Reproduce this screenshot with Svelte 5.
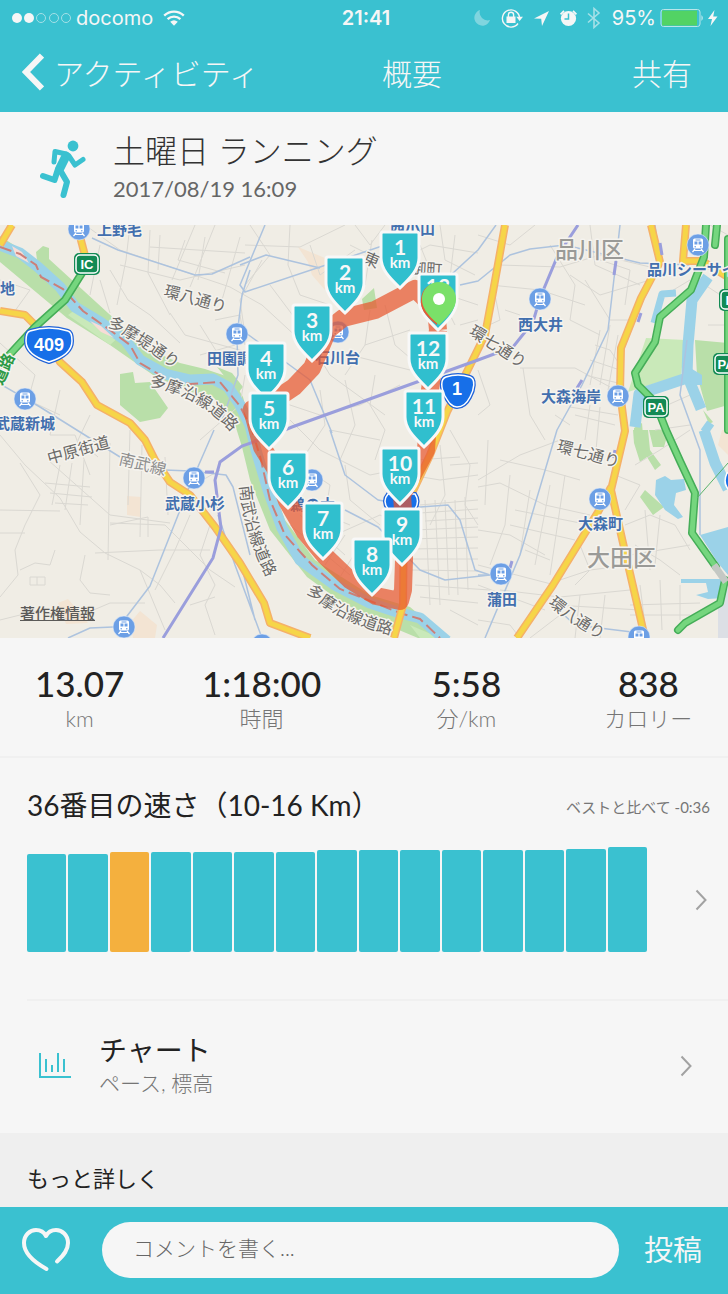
<script>
  const stats = [
    { value: "13.07", unit: "km" },
    { value: "1:18:00", unit: "時間" },
    { value: "5:58", unit: "分/km" },
    { value: "838", unit: "カロリー" },
  ];

  const paces = [98, 98, 100, 100, 100, 100, 100, 102, 102, 102, 102, 102, 102, 103, 105];
  const current = 2;

  // x is the middle of the shield, y its top; later ones lie on top
  const markers = [
    { km: 1, x: 400, y: 7 },
    { km: 2, x: 345, y: 32 },
    { km: 13, x: 438, y: 49 },
    { km: 3, x: 312, y: 80 },
    { km: 12, x: 428, y: 108 },
    { km: 4, x: 266, y: 118 },
    { km: 11, x: 424, y: 166 },
    { km: 5, x: 269, y: 168 },
    { km: 10, x: 400, y: 223 },
    { km: 6, x: 288, y: 227 },
    { km: 7, x: 323, y: 278 },
    { km: 9, x: 402, y: 284 },
    { km: 8, x: 372, y: 314 },
  ];

  const stations = [
    [79, 4], [237, 109], [25, 174], [194, 253], [124, 402], [338, 107],
    [312, 255], [540, 74], [698, 20], [618, 171], [600, 274], [501, 349],
    [639, 412], [262, 420],
  ];

  const places = [
    { text: "上野毛", x: 97, y: 10 },
    { text: "地", x: 0, y: 69 },
    { text: "田園調布", x: 207, y: 139 },
    { text: "石川台", x: 315, y: 138 },
    { text: "武蔵新城", x: -5, y: 204 },
    { text: "武蔵小杉", x: 165, y: 284 },
    { text: "鵜の木", x: 290, y: 285 },
    { text: "西小山", x: 390, y: 9 },
    { text: "西大井", x: 518, y: 105 },
    { text: "品川シーサイド", x: 647, y: 50 },
    { text: "大森海岸", x: 541, y: 177 },
    { text: "大森町", x: 578, y: 304 },
    { text: "蒲田", x: 487, y: 380 },
  ];

  const streets = [
    { text: "環八通り", d: "M163 71 L230 89" },
    { text: "多摩堤通り", d: "M107 101 Q142 119 178 147" },
    { text: "多摩沿線道路", d: "M149 161 Q205 172 238 215" },
    { text: "中原街道", d: "M49 239 L115 221" },
    { text: "南武線", d: "M118 239 L175 253", rail: true },
    { text: "南武沿線道路", d: "M240 261 Q244 315 274 365" },
    { text: "多摩沿線道路", d: "M306 367 Q340 399 400 412" },
    { text: "環七通り", d: "M468 109 L530 149" },
    { text: "環七通り", d: "M556 226 L630 246" },
    { text: "環八通り", d: "M548 379 Q572 401 612 420" },
    { text: "東", d: "M362 37 L390 49" },
    { text: "御町", d: "M410 49 L450 51" },
  ];

  const minorRoads = [
    "M85 0 L120 25 L230 62 L262 80", "M130 0 L126 35 L117 80", "M195 0 L172 55", "M215 0 L190 62",
    "M240 12 L222 75", "M150 5 L148 48 L170 90", "M110 45 L128 75 L150 90 L180 118",
    "M170 88 L185 110 L250 128", "M100 55 L110 88 M120 40 L180 55 L245 40", "M100 20 L90 70",
    "M185 15 L178 35 L225 48", "M150 22 L245 28 M160 10 L158 45 M205 12 L198 55",
    "M0 55 L30 65 L12 90", "M0 118 L35 150 L28 175 L60 190", "M60 165 L50 210 L75 210 L90 250",
    "M90 190 L78 215 L98 232 M130 205 L128 280", "M0 210 L25 240 L60 273 L80 307 L105 328",
    "M20 238 L40 270 L25 300 L15 325 L18 350 L0 372", "M0 285 L60 286 M0 308 L25 308",
    "M48 235 L110 290 L170 298", "M45 258 L90 262 M50 268 L92 272 M55 278 L88 280",
    "M60 240 L52 280 M72 238 L65 285 M84 235 L80 300", "M110 218 L108 335 M142 220 L140 312",
    "M110 300 L148 292 L148 312 M95 328 L160 325 L210 325", "M20 345 L35 338 L50 340 L55 325",
    "M30 352 L45 352 L45 360 L30 360 Z M37 352 V360", "M85 330 L80 355 L90 368 L110 370",
    "M105 328 L140 345 L160 360 L175 378", "M110 298 L165 300 L185 320 L210 345 L235 362",
    "M140 345 L165 405 M190 290 L175 325 L155 365", "M210 300 L200 330 L215 360 L205 380 L215 410",
    "M190 380 L215 372 M0 395 L40 385 L70 395 L110 378 L145 378",
    "M165 232 L168 290 M185 265 L220 245 M200 215 L240 180 L245 150",
    "M245 20 L300 22 L345 0 M250 0 L270 30 L245 60", "M290 0 L288 40 L300 70 L330 80",
    "M262 35 L240 75 L245 110 M270 60 L300 100 L330 150 L385 190", "M262 80 L300 115",
    "M310 20 L320 50 L355 25 M355 0 L370 20 L385 0", "M350 20 L390 40 L430 20 L478 28",
    "M370 85 L365 120 L345 150 M385 80 L395 120 L430 150", "M365 120 L410 105 M350 130 L410 145",
    "M290 195 L320 225 L370 250 L395 245", "M275 175 L320 190 L360 180 L400 160",
    "M320 165 L325 200 L305 230 M345 155 L355 200 L340 235", "M375 150 L370 180 L385 205 L375 235",
    "M330 205 L380 215 M440 0 L445 35 L475 50", "M455 10 L448 70 L478 80 M460 100 L478 95",
    "M300 240 L330 260 L325 290 L350 300 M345 240 L350 275 L380 300",
    "M335 310 L380 290 L400 300 M325 340 L345 310 M340 352 L360 320",
    "M290 300 L350 350 M300 290 L345 330 M310 325 L330 300",
    "M440 220 L445 270 L430 300 M450 205 L470 240 L465 280 L478 300",
    "M410 250 L440 255 L478 250 M415 235 L460 232", "M420 280 L478 275 M420 288 L478 284 M425 296 L478 293",
    "M415 305 L478 302 M410 314 L478 312 M410 324 L478 323 M412 334 L478 334 M412 345 L478 346",
    "M425 275 L430 380 M435 275 L440 380 M445 275 L449 370 M455 275 L458 370 M465 272 L468 365",
    "M415 360 L490 365 M420 372 L478 378", "M450 240 L478 238 M488 215 L485 280",
    "M478 10 L510 20 L535 0 M490 60 L540 65 L585 80", "M495 70 L500 95 L478 105 M505 85 L520 90",
    "M500 40 L560 42 L600 30 L650 42", "M550 20 L575 60 L570 95 L600 110", "M590 0 L595 40 L640 60",
    "M600 35 L630 45 L625 80 M570 50 L600 70 L650 55", "M585 55 L610 95 L630 95",
    "M520 143 L575 143 L610 162", "M523 143 L530 190 L545 215", "M478 145 L490 180 L478 190",
    "M595 120 L610 125 L620 140 M590 135 L620 145 M585 150 L618 158",
    "M600 105 L590 160 M610 100 L600 160 M618 110 L608 165",
    "M570 182 L618 190 M575 190 L615 200 M590 180 L585 215 M600 182 L596 225",
    "M570 200 L555 190 M478 255 L520 230 L560 215", "M478 262 L500 258 L545 280 L590 290",
    "M500 235 L545 245 L580 255 M510 250 L505 300 L490 340", "M515 285 L590 300 M510 300 L575 315",
    "M530 265 L520 330 M550 260 L535 340 M565 250 L550 350 M525 325 L550 335",
    "M478 305 L510 310 L545 330 M478 340 L555 360 M478 360 L545 385",
    "M500 365 L560 372 L630 365 M560 355 L590 345 L630 340", "M580 320 L590 345 L575 360",
    "M635 240 L660 225 L690 205 M615 250 L640 260 L625 285", "M625 300 L650 290 L675 300 L690 325",
    "M645 285 L650 345 M660 290 L655 340 M630 330 L690 320", "M635 320 L660 335 L680 350",
    "M630 380 L700 378 M630 390 L690 390 M640 360 L645 400 M660 355 L662 405 M680 360 L680 395",
    "M555 380 L640 385 M580 370 L575 413 M605 370 L600 413", "M530 413 L560 390",
    "M670 80 L650 120 M665 70 L690 55 M710 0 L728 10", "M705 60 L728 75 M708 100 L728 100",
    "M645 190 L690 170 M655 205 L690 200", "M420 20 L440 70 L455 100 M372 15 L365 60",
    "M478 395 L510 400 L520 413 M450 385 L478 400", "M200 130 L235 120 M215 95 L240 90 L245 120 M200 100 L225 140",
  ];

  const railways = [
    "M92 13 L118 25 L195 50 L212 49 L250 32",
    "M250 45 L242 70 L237 110 L238 150 L222 195",
    "M265 0 L240 60 L245 67 L320 42 L385 20", "M240 40 L266 30 L320 43",
    "M0 159 L40 182 L120 232", "M214 205 L190 260 L150 361 L124 395", "M113 402 L90 403 L68 413",
    "M235 100 L310 155 L332 208", "M330 205 L345 250 L378 275 L420 282 L448 280 L460 295 L475 345 L490 350",
    "M165 245 L190 246 L226 250 L233 262 L250 330",
    "M218 290 L235 340 L262 413 M240 335 L255 395", "M460 60 L478 56 L510 30 L530 24 L565 20 L640 38 L690 40",
    "M620 0 L615 45 L608 105 L582 160 L557 205 L520 330 L485 413", "M345 285 L378 302 L420 345 L445 355 L490 350",
    "M553 380 L575 400 L640 408 M478 350 L500 350", "M440 60 L478 25 L496 0 M687 115 L680 170 L700 225 L700 310",
    "M655 0 L660 38 L641 80 L622 128",
  ];

  const mainRoads = [
    "M12 0 L0 20", "M77 0 L88 42",
    "M0 86 L25 90 L42 107 L60 137 L82 157 L97 180 L130 198 L145 215 L155 235 L170 257 L190 270 L215 302 L240 338 L264 378 L270 398 L310 413",
    "M505 0 L493 67 L485 110 L447 187 L430 230 L404 285 L403 380 L394 413",
    "M651 0 L660 37 L641 73 L621 123 L620 167 L625 206 L611 265 L623 318 L645 413",
    "M611 262 L598 287 L553 360 L517 413",
    "M686 0 L683 36 L702 36 L728 52",
  ];

  const expressways = [
    "M87 40 L65 75 L35 102 L0 140",
    "M706 0 L704 32 L691 65 L660 92 L655 117 L635 148 L638 160 L655 177 L666 205 L680 236 L695 268 L692 308 L716 342",
    "M725 355 L720 378 L685 398 L678 405", "M728 14 V205", "M717 0 L715 20",
  ];
</script>

<main>
  <header>
    <div class="status">
      <div class="carrier">
        <svg width="60" height="12" viewBox="0 0 60 12" aria-hidden="true">
          <g fill="#f6f6f6"><circle cx="5" cy="6" r="5" /><circle cx="17" cy="6" r="5" /></g>
          <g fill="none" stroke="#a5e0e7"><circle cx="29" cy="6" r="4.5" /><circle cx="42" cy="6" r="4.5" /><circle cx="54" cy="6" r="4.5" /></g>
        </svg>
        <span>docomo</span>
        <svg class="wifi" width="22" height="16" viewBox="0 0 22 16" aria-hidden="true">
          <g fill="none" stroke="#f6f6f6" stroke-width="2.4">
            <path d="M1.2 5.6 C6.8 .3 15.2 .3 20.8 5.6" />
            <path d="M4.6 9.2 C8.3 5.8 13.7 5.8 17.4 9.2" />
          </g>
          <path fill="#f6f6f6" d="M7.2 11.8 Q11 8.8 14.8 11.8 L11 15.8 Z" />
        </svg>
      </div>
      <span class="clock">21:41</span>
      <div class="indicators">
        <svg width="136" height="24" viewBox="0 0 136 24" aria-hidden="true">
          <path fill="#7fd5df" d="M8 4 A8 8 0 1 0 18 14 A8 8 0 0 1 8 4" />
          <g fill="none" stroke="#f6f6f6" stroke-width="1.4">
            <path d="M46 17.5 A8.6 8.6 0 1 1 47.6 12" />
            <path d="M36.4 11 V8.8 A2.6 2.6 0 0 1 41.6 8.8 V11" />
          </g>
          <path fill="#f6f6f6" d="M34.5 10.5 H43.5 V17 H34.5 Z M44.3 10.8 H51 L47.6 15 Z M62 12.6 L77 5 L70 20 L69.2 12.8 Z" />
          <circle cx="96.500" cy="12.500" r="7.600" fill="#f6f6f6" />
          <path fill="none" stroke="#f6f6f6" stroke-width="1.8" d="M88.6 8.4 L92 4.8 M101 4.8 L104.400 8.400" />
          <path fill="none" stroke="#3ac1d0" stroke-width="1.5" d="M96.5 7.5 V13 H92.5" />
          <path fill="none" stroke="#a5e0e7" stroke-width="1.6" d="M116 7.5 L127 17 L122 21.500 V2.500 L127 7 L116 16.500" />
        </svg>
        <span>95%</span>
        <svg width="60" height="20" viewBox="0 0 60 20" aria-hidden="true">
          <rect x="1" y="1.500" width="39" height="17" rx="2.500" fill="#3ac1d0" stroke="#b9e6ea" />
          <path fill="#52d364" d="M2 2.500 H37 V17.500 H2 Z" />
          <path fill="#cdeef1" d="M41.500 7 Q44 10 41.500 13 Z" />
          <path fill="#f6f6f6" d="M54.500 2 L48 11 H52 L50.500 18 L57.500 8.500 H53.200 Z" />
        </svg>
      </div>
    </div>

    <nav>
      <button class="back">
        <svg width="22" height="38" viewBox="0 0 22 38" aria-hidden="true">
          <path fill="none" stroke="#f6f6f6" stroke-width="6" d="M20 2.500 L4 19 L20 35.500" />
        </svg>
        アクティビティ
      </button>
      <h1>概要</h1>
      <button class="share">共有</button>
    </nav>
  </header>

  <section class="activity">
    <svg width="46" height="60" viewBox="0 0 46 60" aria-hidden="true">
      <circle cx="33" cy="7" r="5.400" fill="#3ac1d0" />
      <g fill="none" stroke="#3ac1d0" stroke-linecap="round" stroke-linejoin="round">
        <path stroke-width="5" d="M14 23 L15 12.500 L26 15" />
        <path stroke-width="9" d="M26 17 L20 29" />
        <path stroke-width="5" d="M29 17 L35 26 L43 20.500" />
        <path stroke-width="6" d="M18 30 L14.500 41 L3 37" />
        <path stroke-width="6" d="M20 31 L27 43 L23.500 56" />
      </g>
    </svg>
    <div>
      <h2>土曜日 ランニング</h2>
      <time datetime="2017-08-19T16:09">2017/08/19 16:09</time>
    </div>
  </section>

  <section class="map">
    <svg viewBox="0 0 728 413" role="img" aria-label="ランニングコース">
      <defs>
        <g id="train">
          <circle r="11" fill="#6c9fe5" stroke="#e4edf7" stroke-width="0.600" />
          <rect x="-5" y="-6.500" width="10" height="10" rx="1.500" fill="#fff" />
          <path stroke="#6c9fe5" stroke-width="3" d="M-3.500 -2 H-.6 M.6 -2 H3.500" />
          <path stroke="#6c9fe5" stroke-width="1" d="M-2.500 -5 H2.500" />
          <path fill="none" stroke="#fff" stroke-width="1.200" d="M-3 4 L-5.500 7 M3 4 L5.500 7 M-4 5.500 H4" />
          <circle cx="-2.800" cy="1.800" r=".8" fill="#6c9fe5" />
          <circle cx="2.800" cy="1.800" r=".8" fill="#6c9fe5" />
        </g>
        <path id="shield" d="M-17 0 H17 Q19 0 19 2 V26 C19 38 9 47 0 56 C-9 47 -19 38 -19 26 V2 Q-19 0 -17 0 Z" />
      </defs>

      <rect width="728" height="413" fill="#f0ede5" />
      <g class="parks">
        <path d="M0 11 L37 35 L36 27 L43 21 L49 23 L49 34 L108 88 L150 125 L180 138 L205 144 L232 153 L243 172 L252 205 L262 235 L285 295 L315 335 L370 370 L410 382 L447 413 H418 L375 395 L340 376 L307 352 L270 305 L250 255 L242 222 L233 193 L213 172 L187 166 L153 150 L110 120 L67 93 L0 37 Z" />
        <path d="M120 149 L133 147 L135 158 L150 157 L168 183 L160 193 L140 197 L120 180 Z" />
        <path d="M362 74 L374 63 L377 83 L364 85 Z M217 142 L232 148 L243 162 L238 168 Z" />
        <path d="M695 115 L728 118 V180 L707 186 L697 150 Z M703 185 L713 197 L709 199 Z" />
        <path d="M633 205 H648 L650 225 L661 240 L655 245 L647 232 L640 237 L634 218 Z M649 205 H669 L664 222 L653 222 Z" />
        <path d="M645 265 L664 282 L653 290 L640 272 Z M634 203 L642 198 L643 210 H634 Z" />
        <path class="lawn" d="M646 113 L685 115 L681 150 L628 167 Z M68 90 L82 80 L122 109 L110 120 Z M410 400 L440 413 H420 Z" />
      </g>
      <g class="built">
        <path d="M298 22 L330 35 L325 65 L312 50 L308 37 Z M127 271 L141 272 V292 L127 290 Z" />
        <path d="M140 386 L157 400 L155 413 H133 L130 398 Z M58 378 L68 374 L80 388 L88 398 L66 399 Z" />
        <path d="M722 205 H728 V230 L718 220 Z" />
        <path fill="#dcdfe5" d="M718 382 L728 362 V413 H718 Z" />
      </g>

      <g class="minor">
        {#each minorRoads as d}<path {d} />{/each}
      </g>

      <path class="river" d="M0 20 L20 28 L38 42 L60 62 L75 82 L100 97 L125 115 L140 135 L165 149 L190 155 L213 154 L228 162 L240 180 L250 200 L256 225 L268 265 L282 303 L300 335 L335 360 L370 378 L400 388 L420 393 L447 416" />
      <path fill="#f7dcd7" d="M12 21 L22 27 L29 38 L16 31 Z M90 96 L101 101 L114 113 L101 107 Z" />
      <g class="water">
        <path d="M708 52 L692 75 L688 120 L687 150 L701 184 M684 154 L639 169 L635 202" />
        <path stroke-width="7" d="M676 68 L662 69 L654 98" />
        <path d="M704 205 L715 238 L728 264 M704 200 L711 205" />
        <path class="pool" d="M656 255 L665 251 L671 255 L684 254 L686 265 L676 268 L674 280 L683 292 L678 294 L665 285 L655 270 Z" />
        <path class="pool" d="M700 310 L728 302 V350 L718 338 Z M681 354 L728 354 L724 373 L708 374 L696 370 L708 367 L706 358 H681 Z M692 144 L702 150 V160 L690 160 Z" />
      </g>
      <path class="border" d="M0 22 L20 29 L36 40 L41 52 L63 64 L83 86 L110 105 L130 120 L140 138 L165 153 L190 159 L220 157 L240 181 L252 205 L261 235 L270 275 L285 310 L312 340 L340 364 L400 388 L420 394 L440 413" />

      <g class="rail">
        {#each railways as d}<path {d} />{/each}
      </g>
      <g class="roadcase">
        {#each mainRoads as d}<path {d} />{/each}
      </g>
      <g class="road">
        {#each mainRoads as d}<path {d} />{/each}
      </g>
      <path class="express-rail" d="M578 0 L558 30 L540 73 L533 97 L513 122 L478 135 L292 202 L265 213 L242 221 L220 237 L215 255 L221 303 L213 333 L163 413" />
      <path class="express-rail" d="M616 36 L614 50 M582 155 L577 163 M641 88 L638 97 M660 18 L662 30 M205 247 H214 M615 225 L613 233 M512 336 L510 343" />
      <g class="highcase">
        {#each expressways as d}<path {d} />{/each}
      </g>
      <g class="high">
        {#each expressways as d}<path {d} />{/each}
      </g>
      <path fill="none" stroke="#c4c8c4" stroke-width="7" d="M714 340 L726 357" />
      <path fill="none" stroke="#59b36c" d="M697 273 L728 238" />

      <g class="badge">
        <g fill="#176fe8" stroke="#fff" stroke-width="1.500">
          <path stroke="#1f62d8" stroke-width="4" d="M30 106 Q49 100 68 106 Q72 107 72 116 C72 127 62 133 49 137 C36 133 26 127 26 116 Q26 107 30 106 Z" />
          <path d="M30 106 Q49 100 68 106 Q72 107 72 116 C72 127 62 133 49 137 C36 133 26 127 26 116 Q26 107 30 106 Z" />
          <path stroke="#1f62d8" stroke-width="4" d="M446 152 Q458 148 470 152 C476 154 474 165 470 172 C466 180 462 182 457 182 C452 182 449 178 445 171 C441 163 440 154 446 152 Z" />
          <path d="M446 152 Q458 148 470 152 C476 154 474 165 470 172 C466 180 462 182 457 182 C452 182 449 178 445 171 C441 163 440 154 446 152 Z" />
          <path stroke="#1f62d8" stroke-width="4" d="M388 269 H415 Q420 276 415 284 H388 Q382 276 388 269 Z" />
          <path d="M388 269 H415 Q420 276 415 284 H388 Q382 276 388 269 Z M727 248 Q722 259 730 266 V248 Z" />
        </g>
        <text x="49" y="126" font-size="18">409</text>
        <text x="457" y="170" font-size="18">1</text>
        {#each [[87, 39, "IC"], [656, 182, "PA"], [726, 139, "PA"], [732, 75, "IC"]] as [x, y, label]}
          <rect x={x - 13} y={y - 11} width="26" height="22" rx="5" fill="#128a54" />
          <rect x={x - 11} y={y - 9} width="22" height="18" rx="4" fill="#128a54" stroke="#fff" stroke-width="1.500" />
          <text {x} y={y + 5} font-size="13">{label}</text>
        {/each}
      </g>

      {#each stations as [x, y]}
        <use href="#train" {x} {y} />
      {/each}
      <g class="place">
        {#each places as p}<text x={p.x} y={p.y}>{p.text}</text>{/each}
      </g>
      <g class="ward">
        <text x="555" y="33">品川区</text>
        <text x="587" y="341">大田区</text>
      </g>
      {#each streets as s, i}
        <path id="street-{i}" d={s.d} fill="none" />
        <text class="street" class:railname={s.rail}><textPath href="#street-{i}">{s.text}</textPath></text>
      {/each}
      <path id="toll" d="M2 161 L20 120" fill="none" />
      <text class="street toll"><textPath href="#toll">道路</textPath></text>

      <path class="track" d="M438 105 L436 84 L415 64 L375 85 L343 93 L328 105 L312 143 L294 162 L270 178 L252 184 L262 222 L275 243 L287 276 L305 307 L325 331 L350 355 L376 371 L400 376 L403 365 L404 335 L404 300 L402 270 L426 225 L430 165 L438 105" />

      {#each markers as m}
        <g transform="translate({m.x} {m.y})">
          <use href="#shield" class="shield" />
          {#if m.km < 13}
            <text class="km" y="23">{m.km}</text>
            <text class="unit" y="36">km</text>
          {:else}
            <text class="km" y="20">{m.km}</text>
          {/if}
        </g>
      {/each}
      <path fill="#e45b35" d="M437 100 C424 90 420 83 421 74 C422 63 430 58 438 58 Z" />
      <path fill="#7ae069" d="M439 100 C426 89 422 82 422 74 A17 17 0 0 1 456 74 C456 82 451 89 439 100 Z" />
      <circle cx="439" cy="74" r="6" fill="#fff" />
    </svg>
    <a class="legal" href="#legal">著作権情報</a>
  </section>

  <dl class="stats">
    {#each stats as s}
      <div>
        <dd>{s.value}</dd>
        <dt>{s.unit}</dt>
      </div>
    {/each}
  </dl>

  <section class="ranking">
    <div class="heading">
      <h3>36番目の速さ（10-16 Km）</h3>
      <span>ベストと比べて -0:36</span>
    </div>
    <a class="graph" href="#ranking" aria-label="速さの順位">
      <span class="bars">
        {#each paces as height, i}
          <span class="bar" class:current={i === current} style="height: {height}px"></span>
        {/each}
      </span>
      <svg class="chevron" width="12" height="22" viewBox="0 0 12 22" aria-hidden="true"><path d="M1.500 1.500 L10.500 11 L1.500 20.500" /></svg>
    </a>
  </section>

  <a class="chart" href="#chart">
    <svg width="32" height="28" viewBox="0 0 32 28" aria-hidden="true">
      <path fill="none" stroke="#3ac1d0" stroke-width="2" d="M1 1 V25 H32 M7 7 V20 M13 13 V20 M19 1 V20 M25 7 V20" />
    </svg>
    <span class="text">
      <strong>チャート</strong>
      <small>ペース, 標高</small>
    </span>
    <svg class="chevron" width="12" height="22" viewBox="0 0 12 22" aria-hidden="true"><path d="M1.500 1.500 L10.500 11 L1.500 20.500" /></svg>
  </a>

  <h4>もっと詳しく</h4>

  <form class="comment" onsubmit={(e) => e.preventDefault()}>
    <button type="button" class="like" aria-label="いいね">
      <svg width="48" height="44" viewBox="0 0 48 44" aria-hidden="true">
        <path fill="none" stroke="#f6f6f6" stroke-width="4" stroke-linecap="round" stroke-linejoin="round" d="M24.500 41 C12 34 2 25 2 15 C2 7 8 2 14 2 C19 2 22 4 24 8 C26 4 29 2 34 2 C40 2 46 7 46 15 C46 22 42 27 35 33.500" />
      </svg>
    </button>
    <input type="text" placeholder="コメントを書く..." aria-label="コメント" />
    <button class="post">投稿</button>
  </form>
</main>

<style>
  :global(body) {
    margin: 0;
    background: #f6f6f6;
  }
  main {
    font-family: Lato, "Noto Sans CJK JP", sans-serif;
    color: #222;
    background: #f6f6f6;
  }
  h1,
  h2,
  h3,
  h4,
  dl,
  dd {
    margin: 0;
    font-weight: 300;
  }
  svg {
    display: block;
    flex: none;
  }
  button {
    padding: 0;
    border: 0;
    background: none;
    color: #f6f6f6;
    font: inherit;
    cursor: pointer;
  }
  a {
    color: inherit;
    text-decoration: none;
  }
  header {
    background: #3ac1d0;
    color: #f6f6f6;
  }
  .status {
    display: grid;
    grid-template-columns: 1fr auto 1fr;
    align-items: center;
    height: 36px;
    padding: 0 8px 0 12px;
    font-family: Inter, sans-serif;
    font-size: 20px;
  }
  .carrier,
  .indicators {
    display: flex;
    align-items: center;
    gap: 4px;
  }
  .wifi {
    margin-left: 6px;
  }
  .clock {
    font-weight: 600;
  }
  .indicators {
    justify-content: flex-end;
  }
  nav {
    display: grid;
    grid-template-columns: 36fr 25fr 6fr;
    align-items: center;
    height: 72px;
    padding: 0 36px 4px 22px;
    font-size: 30px;
    font-weight: 300;
  }
  nav h1 {
    font-size: 30px;
  }
  .back {
    display: flex;
    align-items: center;
    gap: 10px;
  }
  .share,
  .post {
    white-space: nowrap;
  }
  .activity {
    display: flex;
    align-items: center;
    gap: 27px;
    height: 113px;
    padding-left: 40px;
  }
  .activity h2 {
    font-size: 32px;
    line-height: 40px;
    color: #333;
  }
  .activity time {
    display: block;
    font-size: 22px;
    line-height: 36px;
    color: #666;
  }
  .map {
    position: relative;
  }
  .map svg {
    width: 100%;
    height: auto;
  }
  .legal {
    position: absolute;
    left: 20px;
    bottom: 14px;
    color: #5b5a58;
    font-size: 15px;
    font-weight: 500;
    line-height: 22px;
    text-decoration: underline;
  }
  .parks {
    fill: #b9dfa9;
  }
  .lawn {
    fill: #c9e9b9;
  }
  .built {
    fill: #f3e4d3;
  }
  .minor {
    fill: none;
    stroke: #dad8d2;
  }
  .river,
  .water {
    fill: none;
    stroke: #9bd2e8;
    stroke-width: 11;
    stroke-linejoin: round;
  }
  .pool {
    fill: #9bd2e8;
    stroke: none;
  }
  .border {
    fill: none;
    stroke: #cc7f78;
    stroke-width: 2;
    stroke-dasharray: 12 5;
  }
  .rail {
    fill: none;
    stroke: #adc3de;
    stroke-width: 1.5;
    stroke-linejoin: round;
  }
  .express-rail {
    fill: none;
    stroke: #9a9edc;
    stroke-width: 3;
  }
  .roadcase,
  .road,
  .highcase,
  .high {
    fill: none;
    stroke-linejoin: round;
  }
  .roadcase {
    stroke: #f5b168;
    stroke-width: 8;
  }
  .road {
    stroke: #f6d548;
    stroke-width: 5;
  }
  .highcase {
    stroke: #45ad58;
    stroke-width: 8;
    stroke-linecap: round;
  }
  .high {
    stroke: #75d67e;
    stroke-width: 5;
    stroke-linecap: round;
  }
  .badge text {
    fill: #fff;
    font-family: "Liberation Sans", sans-serif;
    font-weight: 700;
    text-anchor: middle;
  }
  .place,
  .ward,
  .street {
    font-family: "Noto Sans CJK JP", sans-serif;
    paint-order: stroke;
    stroke: #f5f3ee;
    stroke-width: 3;
    stroke-linejoin: round;
  }
  .place {
    fill: #426fae;
    font-size: 15px;
    font-weight: 700;
  }
  .ward {
    fill: #9a9a97;
    font-size: 23px;
    font-weight: 500;
  }
  .street {
    fill: #6b6a68;
    font-size: 16px;
  }
  .railname {
    fill: #8f8f8e;
  }
  .toll {
    fill: #2c9a45;
    font-weight: 700;
  }
  .track {
    fill: none;
    stroke: #e8582f;
    stroke-width: 18;
    stroke-linejoin: round;
    opacity: 0.72;
  }
  .shield {
    fill: #30bfce;
    stroke: #f8f8f8;
    stroke-width: 3;
  }
  .km,
  .unit {
    fill: #f8f8f8;
    font-weight: 700;
    text-anchor: middle;
  }
  .km {
    font-size: 21px;
  }
  .unit {
    font-size: 15px;
  }
  .stats {
    display: grid;
    grid-template-columns: 7fr 9fr 9fr 7fr;
    padding: 26px 0 21px;
    border-bottom: 2px solid #f0f0f0;
    text-align: center;
  }
  .stats div {
    display: flex;
    flex-direction: column;
  }
  .stats dd {
    font-size: 35px;
    font-weight: 500;
    line-height: 38px;
  }
  .stats dt {
    color: #757575;
    font-size: 22px;
    font-weight: 300;
    line-height: 33px;
  }
  .heading {
    display: flex;
    align-items: center;
    justify-content: space-between;
    padding: 27px 18px 0 27px;
  }
  .heading h3 {
    font-size: 28px;
    font-weight: 400;
    line-height: 40px;
  }
  .heading span {
    padding-top: 3px;
    color: #777;
    font-size: 15px;
  }
  .graph {
    display: flex;
    align-items: center;
    gap: 48px;
    margin-left: 27px;
    padding: 22px 21px 47px 0;
    border-bottom: 2px solid #f0f0f0;
  }
  .bars {
    display: flex;
    flex: 1;
    align-items: flex-end;
    gap: 2px;
  }
  .bar {
    flex: 1;
    border-radius: 2px;
    background: #3ac1d0;
  }
  .current {
    background: #f4b03e;
  }
  .chevron {
    fill: none;
    stroke: #a2a2a2;
    stroke-width: 2;
  }
  .chart {
    display: flex;
    align-items: center;
    padding: 32px 36px 34px 39px;
  }
  .text {
    display: flex;
    flex: 1;
    flex-direction: column;
    padding-left: 28px;
  }
  .text strong {
    font-size: 28px;
    font-weight: 400;
    line-height: 34px;
  }
  .text small {
    color: #757575;
    font-size: 21px;
    font-weight: 300;
    line-height: 32px;
  }
  h4 {
    padding: 30px 27px 12px;
    background: #efefef;
    font-size: 22px;
    font-weight: 400;
    line-height: 32px;
  }
  .comment {
    position: sticky;
    bottom: 0;
    display: flex;
    align-items: center;
    gap: 25px;
    height: 87px;
    padding: 0 26px 2px 22px;
    box-sizing: border-box;
    background: #3ac1d0;
  }
  .comment input {
    flex: 1;
    min-width: 0;
    height: 56px;
    margin-left: 7px;
    padding: 0 31px 4px;
    box-sizing: border-box;
    border: 0;
    border-radius: 28px;
    background: #f6f6f6;
    color: #222;
    font: inherit;
    font-size: 21px;
    font-weight: 300;
  }
  .comment input::placeholder {
    color: #666;
    opacity: 1;
  }
  .post {
    padding-bottom: 3px;
    font-size: 29px;
  }
</style>
